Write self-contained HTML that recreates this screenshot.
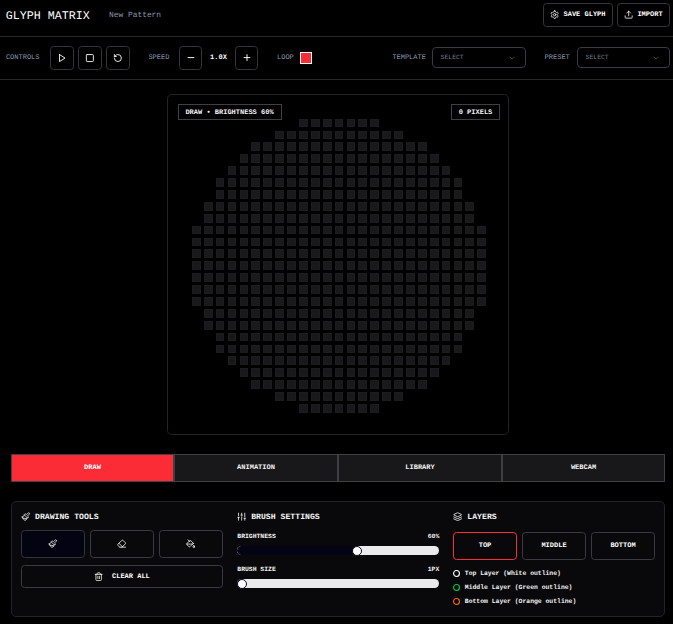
<!DOCTYPE html>
<html><head><meta charset="utf-8"><title>Glyph Matrix</title>
<style>
*{box-sizing:border-box;margin:0;padding:0}
html,body{width:673px;height:624px;background:#000;overflow:hidden}
body{font-family:"Liberation Mono","DejaVu Sans Mono",monospace;color:#fff;position:relative;text-rendering:geometricPrecision}
.abs{position:absolute}
.hdr{left:0;top:0;width:673px;height:37px;border-bottom:1px solid #27272a}
.title{left:5.8px;top:8.5px;font-size:11.67px;line-height:14px;white-space:pre;color:#fff}
.sub{left:109px;top:10.9px;font-size:7.9px;line-height:10px;color:#8897ad;white-space:pre}
.hbtn{top:3px;height:24px;border:1px solid #34343b;border-radius:3.6px;font-size:7px;font-weight:bold;display:flex;align-items:center;white-space:pre}
.ctl{left:0;top:37px;width:673px;height:43px;border-bottom:1px solid #27272a}
.lbl{font-size:7px;color:#8a9ab1;line-height:8px;white-space:pre}
.sq svg{transform:translate(.2px,.4px);stroke-width:2.3}
.sq{top:46px;width:24px;height:24px;border:1px solid #34343b;border-radius:3.6px;display:flex;align-items:center;justify-content:center}
.sel{top:47px;width:94px;height:21px;border:1px solid #3a3a42;border-radius:4px;font-size:6.42px;color:#6f7a8c;display:flex;align-items:center;padding-left:7.6px;white-space:pre}
.panel{left:167px;top:94px;width:342px;height:341px;border:1px solid #232326;border-radius:4.7px}
.tag{top:104px;height:16px;border:1px solid #3f3f46;font-size:7px;font-weight:bold;display:flex;align-items:center;justify-content:center;white-space:pre;color:#f4f4f5;padding-top:1.7px}
.grid{left:191.96875px;top:118.65625px;display:grid;grid-template-columns:repeat(25,8.734375px);grid-auto-rows:8.734375px;gap:3.15625px}
.grid i{background:#19191c;border:1px solid #1c1c1f;display:block}
.grid b{display:block}
.tab{top:454px;height:28px;width:163px;border:1px solid #3f3f46;background:#18181b;font-size:7px;font-weight:bold;display:flex;align-items:center;justify-content:center;color:#f4f4f5}
.tab.on{background:#fb2c36;color:#fff}
.bp{left:11px;top:501px;width:654px;height:116px;border:1px solid #232326;border-radius:5px;background:#09090b}
.h3{margin-top:1px;font-size:8.17px;font-weight:bold;line-height:10px;white-space:pre;color:#f4f4f5}
.tool{top:530px;width:64px;height:28px;border:1px solid #3a3a42;border-radius:3.6px;display:flex;align-items:center;justify-content:center;font-size:7px;font-weight:bold;white-space:pre}
.sm{font-size:6.42px;font-weight:bold;line-height:8px;white-space:pre;color:#f4f4f5}
.track{left:237.3px;width:201.9px;height:9.3px;border-radius:5px;background:#ebebed;overflow:hidden}
.range{position:absolute;left:0;top:0;bottom:0;background:#030314}
.thumb{width:10px;height:10px;border-radius:50%;background:#fff;border:1px solid #0a0a23}
.dot{left:453.4px;width:7px;height:7px;border-radius:50%;border:1px solid #fff}
svg{display:block;fill:none;stroke:currentColor;stroke-width:2;stroke-linecap:round;stroke-linejoin:round}
</style></head><body>

<div class="abs hdr"></div>
<div class="abs title">GLYPH MATRIX</div>
<div class="abs sub">New Pattern</div>
<div class="abs hbtn" style="left:543px;width:70px"><svg style="position:absolute;left:5.6px;top:5.9px" width="9.33" height="9.33" viewBox="0 0 24 24"><path d="M12.22 2h-.44a2 2 0 0 0-2 2v.18a2 2 0 0 1-1 1.73l-.43.25a2 2 0 0 1-2 0l-.15-.08a2 2 0 0 0-2.73.73l-.22.38a2 2 0 0 0 .73 2.73l.15.1a2 2 0 0 1 1 1.72v.51a2 2 0 0 1-1 1.74l-.15.09a2 2 0 0 0-.73 2.73l.22.38a2 2 0 0 0 2.73.73l.15-.08a2 2 0 0 1 2 0l.43.25a2 2 0 0 1 1 1.73V20a2 2 0 0 0 2 2h.44a2 2 0 0 0 2-2v-.18a2 2 0 0 1 1-1.73l.43-.25a2 2 0 0 1 2 0l.15.08a2 2 0 0 0 2.73-.73l.22-.39a2 2 0 0 0-.73-2.73l-.15-.08a2 2 0 0 1-1-1.74v-.5a2 2 0 0 1 1-1.74l.15-.09a2 2 0 0 0 .73-2.73l-.22-.38a2 2 0 0 0-2.73-.73l-.15.08a2 2 0 0 1-2 0l-.43-.25a2 2 0 0 1-1-1.73V4a2 2 0 0 0-2-2z"/><circle cx="12" cy="12" r="3"/></svg><span style="position:absolute;left:19.5px">SAVE GLYPH</span></div>
<div class="abs hbtn" style="left:617px;width:53px"><svg style="position:absolute;left:5.6px;top:5.9px" width="9.33" height="9.33" viewBox="0 0 24 24"><path d="M21 15v4a2 2 0 0 1-2 2H5a2 2 0 0 1-2-2v-4"/><polyline points="17 8 12 3 7 8"/><line x1="12" y1="3" x2="12" y2="15"/></svg><span style="position:absolute;left:19.4px">IMPORT</span></div>

<div class="abs ctl"></div>
<div class="abs lbl" style="left:5.9px;top:53.6px">CONTROLS</div>
<div class="abs sq" style="left:50px"><svg width="9.33" height="9.33" viewBox="0 0 24 24"><polygon points="6 3 20 12 6 21 6 3"/></svg></div>
<div class="abs sq" style="left:78px"><svg width="9.33" height="9.33" viewBox="0 0 24 24"><rect x="3" y="3" width="18" height="18" rx="2"/></svg></div>
<div class="abs sq" style="left:106px"><svg width="9.33" height="9.33" viewBox="0 0 24 24"><path d="M3 12a9 9 0 1 0 9-9 9.75 9.75 0 0 0-6.74 2.74L3 8"/><path d="M3 3v5h5"/></svg></div>
<div class="abs lbl" style="left:148.4px;top:53.6px">SPEED</div>
<div class="abs sq" style="left:179px;width:23px"><svg style="transform:translate(0,-.42px)" width="10" height="10" viewBox="0 0 24 24"><path d="M5 12h14"/></svg></div>
<div class="abs" style="left:210.1px;top:53.9px;font-size:7px;font-weight:bold;line-height:9px;white-space:pre">1.0X</div>
<div class="abs sq" style="left:235px;width:23px"><svg style="transform:translate(0,-.42px)" width="10" height="10" viewBox="0 0 24 24"><path d="M5 12h14"/><path d="M12 5v14"/></svg></div>
<div class="abs lbl" style="left:277px;top:53.6px">LOOP</div>
<div class="abs" style="left:300px;top:52px;width:12px;height:12px;background:#fb2c36;border:1px solid #fff"></div>
<div class="abs lbl" style="left:392.3px;top:53.6px">TEMPLATE</div>
<div class="abs sel" style="left:432px">SELECT<svg style="position:absolute;right:8.6px;top:5.6px;opacity:.8" width="8.2" height="8.2" viewBox="0 0 24 24"><path d="m6 9 6 6 6-6"/></svg></div>
<div class="abs lbl" style="left:544.6px;top:53.6px">PRESET</div>
<div class="abs sel" style="left:577px;width:93px">SELECT<svg style="position:absolute;right:8.6px;top:5.6px;opacity:.8" width="8.2" height="8.2" viewBox="0 0 24 24"><path d="m6 9 6 6 6-6"/></svg></div>

<div class="abs panel"></div>
<div class="abs tag" style="left:178px;width:104px;padding-right:1px">DRAW • BRIGHTNESS 60%</div>
<div class="abs tag" style="left:451px;width:49px">0 PIXELS</div>
<div class="abs grid"><b></b><b></b><b></b><b></b><b></b><b></b><b></b><b></b><b></b><i></i><i></i><i></i><i></i><i></i><i></i><i></i><b></b><b></b><b></b><b></b><b></b><b></b><b></b><b></b><b></b><b></b><b></b><b></b><b></b><b></b><b></b><b></b><i></i><i></i><i></i><i></i><i></i><i></i><i></i><i></i><i></i><i></i><i></i><b></b><b></b><b></b><b></b><b></b><b></b><b></b><b></b><b></b><b></b><b></b><b></b><i></i><i></i><i></i><i></i><i></i><i></i><i></i><i></i><i></i><i></i><i></i><i></i><i></i><i></i><i></i><b></b><b></b><b></b><b></b><b></b><b></b><b></b><b></b><b></b><i></i><i></i><i></i><i></i><i></i><i></i><i></i><i></i><i></i><i></i><i></i><i></i><i></i><i></i><i></i><i></i><i></i><b></b><b></b><b></b><b></b><b></b><b></b><b></b><i></i><i></i><i></i><i></i><i></i><i></i><i></i><i></i><i></i><i></i><i></i><i></i><i></i><i></i><i></i><i></i><i></i><i></i><i></i><b></b><b></b><b></b><b></b><b></b><i></i><i></i><i></i><i></i><i></i><i></i><i></i><i></i><i></i><i></i><i></i><i></i><i></i><i></i><i></i><i></i><i></i><i></i><i></i><i></i><i></i><b></b><b></b><b></b><b></b><i></i><i></i><i></i><i></i><i></i><i></i><i></i><i></i><i></i><i></i><i></i><i></i><i></i><i></i><i></i><i></i><i></i><i></i><i></i><i></i><i></i><b></b><b></b><b></b><i></i><i></i><i></i><i></i><i></i><i></i><i></i><i></i><i></i><i></i><i></i><i></i><i></i><i></i><i></i><i></i><i></i><i></i><i></i><i></i><i></i><i></i><i></i><b></b><b></b><i></i><i></i><i></i><i></i><i></i><i></i><i></i><i></i><i></i><i></i><i></i><i></i><i></i><i></i><i></i><i></i><i></i><i></i><i></i><i></i><i></i><i></i><i></i><b></b><i></i><i></i><i></i><i></i><i></i><i></i><i></i><i></i><i></i><i></i><i></i><i></i><i></i><i></i><i></i><i></i><i></i><i></i><i></i><i></i><i></i><i></i><i></i><i></i><i></i><i></i><i></i><i></i><i></i><i></i><i></i><i></i><i></i><i></i><i></i><i></i><i></i><i></i><i></i><i></i><i></i><i></i><i></i><i></i><i></i><i></i><i></i><i></i><i></i><i></i><i></i><i></i><i></i><i></i><i></i><i></i><i></i><i></i><i></i><i></i><i></i><i></i><i></i><i></i><i></i><i></i><i></i><i></i><i></i><i></i><i></i><i></i><i></i><i></i><i></i><i></i><i></i><i></i><i></i><i></i><i></i><i></i><i></i><i></i><i></i><i></i><i></i><i></i><i></i><i></i><i></i><i></i><i></i><i></i><i></i><i></i><i></i><i></i><i></i><i></i><i></i><i></i><i></i><i></i><i></i><i></i><i></i><i></i><i></i><i></i><i></i><i></i><i></i><i></i><i></i><i></i><i></i><i></i><i></i><i></i><i></i><i></i><i></i><i></i><i></i><i></i><i></i><i></i><i></i><i></i><i></i><i></i><i></i><i></i><i></i><i></i><i></i><i></i><i></i><i></i><i></i><i></i><i></i><i></i><i></i><i></i><i></i><i></i><i></i><i></i><i></i><i></i><i></i><i></i><i></i><i></i><i></i><i></i><i></i><i></i><i></i><i></i><i></i><i></i><i></i><i></i><i></i><i></i><i></i><i></i><i></i><i></i><i></i><i></i><i></i><b></b><i></i><i></i><i></i><i></i><i></i><i></i><i></i><i></i><i></i><i></i><i></i><i></i><i></i><i></i><i></i><i></i><i></i><i></i><i></i><i></i><i></i><i></i><i></i><b></b><b></b><i></i><i></i><i></i><i></i><i></i><i></i><i></i><i></i><i></i><i></i><i></i><i></i><i></i><i></i><i></i><i></i><i></i><i></i><i></i><i></i><i></i><i></i><i></i><b></b><b></b><b></b><i></i><i></i><i></i><i></i><i></i><i></i><i></i><i></i><i></i><i></i><i></i><i></i><i></i><i></i><i></i><i></i><i></i><i></i><i></i><i></i><i></i><b></b><b></b><b></b><b></b><i></i><i></i><i></i><i></i><i></i><i></i><i></i><i></i><i></i><i></i><i></i><i></i><i></i><i></i><i></i><i></i><i></i><i></i><i></i><i></i><i></i><b></b><b></b><b></b><b></b><b></b><i></i><i></i><i></i><i></i><i></i><i></i><i></i><i></i><i></i><i></i><i></i><i></i><i></i><i></i><i></i><i></i><i></i><i></i><i></i><b></b><b></b><b></b><b></b><b></b><b></b><b></b><i></i><i></i><i></i><i></i><i></i><i></i><i></i><i></i><i></i><i></i><i></i><i></i><i></i><i></i><i></i><i></i><i></i><b></b><b></b><b></b><b></b><b></b><b></b><b></b><b></b><b></b><i></i><i></i><i></i><i></i><i></i><i></i><i></i><i></i><i></i><i></i><i></i><i></i><i></i><i></i><i></i><b></b><b></b><b></b><b></b><b></b><b></b><b></b><b></b><b></b><b></b><b></b><b></b><i></i><i></i><i></i><i></i><i></i><i></i><i></i><i></i><i></i><i></i><i></i><b></b><b></b><b></b><b></b><b></b><b></b><b></b><b></b><b></b><b></b><b></b><b></b><b></b><b></b><b></b><b></b><i></i><i></i><i></i><i></i><i></i><i></i><i></i><b></b><b></b><b></b><b></b><b></b><b></b><b></b><b></b><b></b></div>

<div class="abs tab on" style="left:11px">DRAW</div>
<div class="abs tab" style="left:174px;width:164px">ANIMATION</div>
<div class="abs tab" style="left:338px;width:164px">LIBRARY</div>
<div class="abs tab" style="left:502px">WEBCAM</div>

<div class="abs bp"></div>
<svg class="abs" style="left:21.2px;top:512px" width="9.33" height="9.33" viewBox="0 0 24 24"><path d="m14.622 17.897-10.68-2.913"/><path d="M18.376 2.622a1 1 0 1 1 3.002 3.002L17.36 9.643a.5.5 0 0 0 0 .707l.944.944a2.410 2.410 0 0 1 0 3.408l-.944.944a.5.5 0 0 1-.707 0L8.354 7.348a.5.5 0 0 1 0-.707l.944-.944a2.410 2.410 0 0 1 3.408 0l.944.944a.5.5 0 0 0 .707 0z"/><path d="M9 8c-1.804 2.710-3.970 3.460-6.583 3.948a.507.507 0 0 0-.302.819l7.320 8.883a1 1 0 0 0 1.185.204C12.735 20.405 16 16.792 16 15"/></svg>
<div class="abs h3" style="left:35px;top:511.6px">DRAWING TOOLS</div>
<div class="abs tool" style="left:21px;background:#030312;border-color:#33333f"><svg width="9.33" height="9.33" viewBox="0 0 24 24"><path d="m14.622 17.897-10.68-2.913"/><path d="M18.376 2.622a1 1 0 1 1 3.002 3.002L17.36 9.643a.5.5 0 0 0 0 .707l.944.944a2.410 2.410 0 0 1 0 3.408l-.944.944a.5.5 0 0 1-.707 0L8.354 7.348a.5.5 0 0 1 0-.707l.944-.944a2.410 2.410 0 0 1 3.408 0l.944.944a.5.5 0 0 0 .707 0z"/><path d="M9 8c-1.804 2.710-3.970 3.460-6.583 3.948a.507.507 0 0 0-.302.819l7.320 8.883a1 1 0 0 0 1.185.204C12.735 20.405 16 16.792 16 15"/></svg></div>
<div class="abs tool" style="left:90px"><svg width="9.33" height="9.33" viewBox="0 0 24 24"><path d="m7 21-4.300-4.300c-1-1-1-2.500 0-3.400l9.600-9.600c1-1 2.500-1 3.400 0l5.600 5.600c1 1 1 2.500 0 3.400L13 21"/><path d="M22 21H7"/><path d="m5 11 9 9"/></svg></div>
<div class="abs tool" style="left:159px"><svg width="9.33" height="9.33" viewBox="0 0 24 24"><path d="m19 11-8-8-8.600 8.600a2 2 0 0 0 0 2.800l5.200 5.200c.8.800 2 .800 2.800 0L19 11Z"/><path d="m5 2 5 5"/><path d="M2 13h15"/><path d="M22 20a2 2 0 1 1-4 0c0-1.600 1.700-2.400 2-4 .3 1.600 2 2.400 2 4Z"/></svg></div>
<div class="abs tool" style="left:21px;top:565px;width:202px;height:23px"><svg style="margin-right:8.5px" width="9.33" height="9.33" viewBox="0 0 24 24"><path d="M3 6h18"/><path d="M19 6v14c0 1-1 2-2 2H7c-1 0-2-1-2-2V6"/><path d="M8 6V4c0-1 1-2 2-2h4c1 0 2 1 2 2v2"/><line x1="10" x2="10" y1="11" y2="17"/><line x1="14" x2="14" y1="11" y2="17"/></svg>CLEAR ALL</div>

<svg class="abs" style="left:237.1px;top:512px" width="9.33" height="9.33" viewBox="0 0 24 24"><line x1="4" x2="4" y1="21" y2="14"/><line x1="4" x2="4" y1="10" y2="3"/><line x1="12" x2="12" y1="21" y2="12"/><line x1="12" x2="12" y1="8" y2="3"/><line x1="20" x2="20" y1="21" y2="16"/><line x1="20" x2="20" y1="12" y2="3"/><line x1="2" x2="6" y1="14" y2="14"/><line x1="10" x2="14" y1="8" y2="8"/><line x1="18" x2="22" y1="16" y2="16"/></svg>
<div class="abs h3" style="left:251.2px;top:511.6px">BRUSH SETTINGS</div>
<div class="abs sm" style="left:237.3px;top:532.8px">BRIGHTNESS</div>
<div class="abs sm" style="left:427.7px;top:532.8px">60%</div>
<div class="abs track" style="top:545.9px"><div class="range" style="width:119px"></div></div>
<div class="abs thumb" style="left:352px;top:545.5px"></div>
<div class="abs sm" style="left:237.3px;top:565.8px">BRUSH SIZE</div>
<div class="abs sm" style="left:427.7px;top:565.8px">1PX</div>
<div class="abs track" style="top:579px"><div class="range" style="width:4px"></div></div>
<div class="abs thumb" style="left:236.7px;top:578.6px"></div>

<svg class="abs" style="left:453.1px;top:512px" width="9.33" height="9.33" viewBox="0 0 24 24"><path d="m12.830 2.180a2 2 0 0 0-1.660 0L2.600 6.080a1 1 0 0 0 0 1.830l8.580 3.910a2 2 0 0 0 1.660 0l8.580-3.900a1 1 0 0 0 0-1.830Z"/><path d="m22 17.650-9.170 4.160a2 2 0 0 1-1.660 0L2 17.650"/><path d="m22 12.650-9.170 4.160a2 2 0 0 1-1.660 0L2 12.650"/></svg>
<div class="abs h3" style="left:467.3px;top:511.6px">LAYERS</div>
<div class="abs tool" style="left:453px;top:532px;border-color:#fb2c36">TOP</div>
<div class="abs tool" style="left:522px;top:532px">MIDDLE</div>
<div class="abs tool" style="left:591px;top:532px">BOTTOM</div>
<svg class="abs" style="left:453px;top:570px;color:#fff" width="7" height="7" viewBox="0 0 7 7"><circle cx="3.5" cy="3.5" r="2.95" stroke-width="1.1"/></svg>
<div class="abs sm" style="left:464.8px;top:570.4px">Top Layer (White outline)</div>
<svg class="abs" style="left:453px;top:584px;color:#00c950" width="7" height="7" viewBox="0 0 7 7"><circle cx="3.5" cy="3.5" r="2.95" stroke-width="1.1"/></svg>
<div class="abs sm" style="left:464.8px;top:584.4px">Middle Layer (Green outline)</div>
<svg class="abs" style="left:453px;top:598px;color:#ff6900" width="7" height="7" viewBox="0 0 7 7"><circle cx="3.5" cy="3.5" r="2.95" stroke-width="1.1"/></svg>
<div class="abs sm" style="left:464.8px;top:598.4px">Bottom Layer (Orange outline)</div>
</body></html>
